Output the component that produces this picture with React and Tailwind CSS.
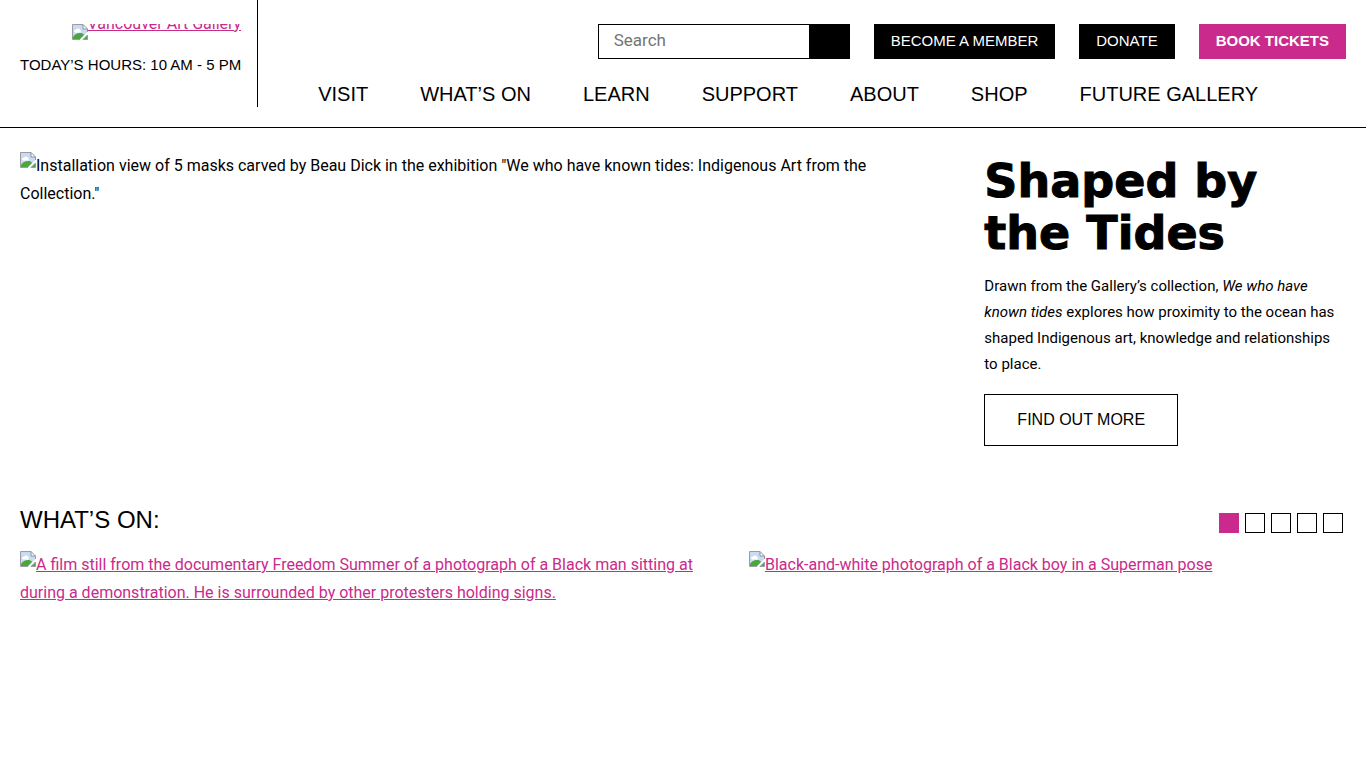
const NAV = ["VISIT", "WHAT’S ON", "LEARN", "SUPPORT", "ABOUT", "SHOP", "FUTURE GALLERY"];

function BrokenImage() {
  return (
    <svg viewBox="0 0 16 16" className="inline-block size-4 shrink-0 align-[3px]" aria-hidden="true">
      <path d="M0.5 15.5V0.5H11L15.5 5V8L8 15.5Z" fill="#c9dbf3" />
      <path d="M2 7.5a2 2 0 0 1 2-2 2.5 2.5 0 0 1 4.500 1 1.500 1.500 0 0 1 0 2H3Z" fill="#fff" />
      <path d="M1 15V13C3 10 6 8.500 9 9c1.500.3 2.500 1 3 2L8 15Z" fill="#4ca63c" />
      <path d="M0.5 15.500V0.500H11M15.500 5V8M0.500 15.500H8" fill="none" stroke="#9a9da3" />
      <path d="M11 0.500V5H15.500Z" fill="#fff" stroke="#8f9299" />
      <path d="M8 16 16 8V10L10 16Z" fill="#fff" />
      <path d="M11 15.500H15.500V11Z" fill="#4ca63c" stroke="#9a9da3" />
    </svg>
  );
}

function Slide({ children }) {
  return (
    <a href="#" className="block text-[#ca2a8b] underline">
      <BrokenImage />
      {children}
    </a>
  );
}

export default function App() {
  return (
    <div className="min-h-screen bg-white font-['Trebuchet_MS','Roboto',sans-serif] text-base leading-7 text-black">
      <header className="flex items-start border-b border-black pb-[19px]">
        <div className="flex h-[107px] shrink-0 flex-col items-end border-r border-black pt-6 pr-4 pl-5">
          <a href="#" className="flex h-4 items-end overflow-hidden text-[#ca2a8b] underline">
            <BrokenImage />
            <span className="pb-0.5 leading-7">Vancouver Art Gallery</span>
          </a>
          <p className="mt-[11px] font-['Liberation_Sans',sans-serif] text-[15px]">TODAY’S HOURS: 10 AM - 5 PM</p>
        </div>
        <div className="flex grow flex-col pt-6 pr-5 font-['Liberation_Sans',sans-serif]">
          <div className="flex justify-end gap-6 text-[15px] leading-[33px] text-white">
            <form role="search" className="flex" onSubmit={(e) => e.preventDefault()}>
              <input
                type="text"
                aria-label="Search"
                placeholder="Search"
                className="h-[35px] w-[212px] border border-black bg-white px-[15px] pb-1 font-['Trebuchet_MS','Roboto',sans-serif] text-[17px] text-black placeholder:text-[#757575]"
              />
              <button type="submit" aria-label="Submit search" className="w-10 bg-black" />
            </form>
            <a href="#" className="bg-black px-[17px] pb-0.5">BECOME A MEMBER</a>
            <a href="#" className="bg-black px-[17px] pb-0.5">DONATE</a>
            <a href="#" className="bg-[#ca2a8b] px-[17px] pb-0.5 font-bold">BOOK TICKETS</a>
          </div>
          <nav className="mt-[21px] flex gap-[52px] pl-[60px] text-xl leading-7">
            {NAV.map((item) => (
              <a key={item} href="#" className="whitespace-nowrap">{item}</a>
            ))}
          </nav>
        </div>
      </header>

      <main className="px-5 pt-6">
        <section className="grid grid-cols-[8fr_3fr]">
          <div className="pr-16">
            <BrokenImage />
            Installation view of 5 masks carved by Beau Dick in the exhibition "We who have known tides: Indigenous Art from the Collection."
          </div>
          <div>
            <h1 className="pt-[3px] font-['Arial_Black','DejaVu_Sans',sans-serif] text-[46px] leading-[52px] font-black [-webkit-text-stroke:1px_black]">
              Shaped by <br />the Tides
            </h1>
            <p className="mt-[14px] text-[15px] leading-[26px]">
              Drawn from the Gallery’s collection, <em>We who have known tides</em> explores how proximity to the ocean has
              shaped Indigenous art, knowledge and relationships to place.
            </p>
            <a href="#" className="mt-[17px] inline-block border border-black px-8 font-['Liberation_Sans',sans-serif] text-base leading-[50px]">
              FIND OUT MORE
            </a>
          </div>
        </section>

        <section className="mt-14">
          <div className="flex items-end justify-between">
            <h2 className="font-['Liberation_Sans',sans-serif] text-2xl leading-9">WHAT’S ON:</h2>
            <div className="flex gap-1.5 pr-[3px] pb-[5px]">
              {[1, 2, 3, 4, 5].map((n) => (
                <button
                  key={n}
                  type="button"
                  aria-label={`Slide ${n}`}
                  className={n === 1 ? "size-5 bg-[#ca2a8b]" : "size-5 border border-black bg-white"}
                />
              ))}
            </div>
          </div>
          <div className="mt-[13px] grid grid-cols-[19fr_16fr] gap-5">
            <Slide>
              A film still from the documentary Freedom Summer of a photograph of a Black man sitting at during a demonstration. He is surrounded by other protesters holding signs.
            </Slide>
            <Slide>Black-and-white photograph of a Black boy in a Superman pose</Slide>
          </div>
        </section>
      </main>
    </div>
  );
}
